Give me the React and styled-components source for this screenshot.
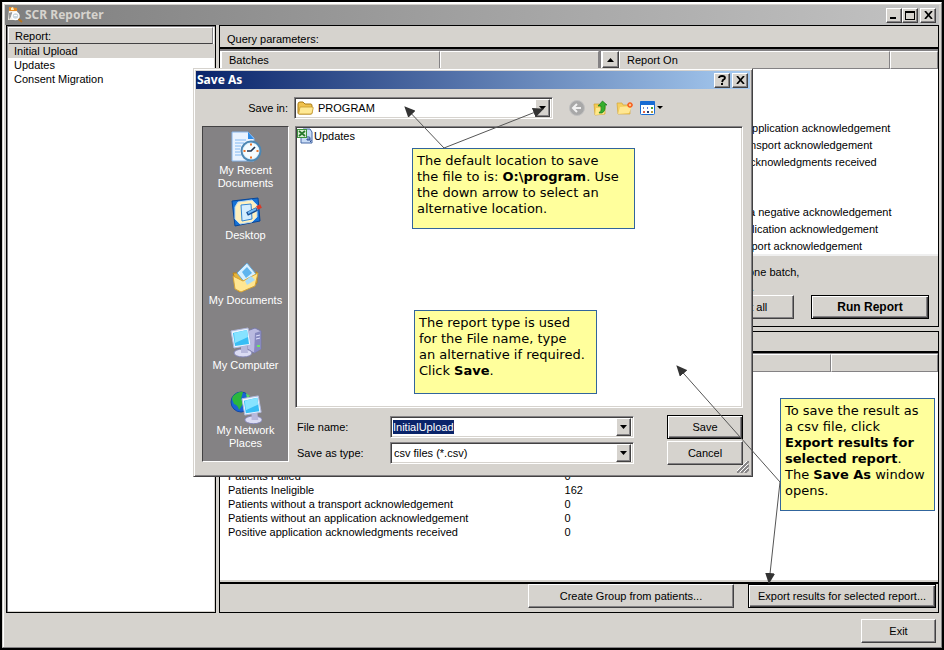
import React, { useEffect, useRef } from "react";
import styled, { createGlobalStyle, css } from "styled-components";

const face = "#d6d3ce";
const shade = "#848284";
const dark = "#424142";

const GlobalStyle = createGlobalStyle`
  * { box-sizing: border-box; }
  body {
    margin: 0;
    background: #000;
    color: #000;
    font: 11px/14px "Liberation Sans", Arial, sans-serif;
  }
  button, input, select { font: inherit; color: inherit; margin: 0; border-radius: 0; }
  ul { list-style: none; margin: 0; padding: 0; }
  p { margin: 0; }
`;

const raised = css`
  border: 1px solid;
  border-color: #fff ${dark} ${dark} #fff;
  box-shadow: inset -1px -1px 0 ${shade};
`;

const sunken = css`
  border: 1px solid;
  border-color: ${shade} #fff #fff ${shade};
  box-shadow: inset 1px 1px 0 ${dark}, inset -1px -1px 0 ${face};
`;

/* ---------- main window ---------- */

const Screen = styled.div`
  position: relative;
  display: flex;
  min-height: 100vh;
  padding: 2px;
  background: #000;
  overflow: hidden;
`;

const AppWindow = styled.main`
  flex: 1;
  display: flex;
  flex-direction: column;
  min-width: 0;
  padding: 2px;
  background: ${face};
  border: 1px solid;
  border-color: #fff ${shade} ${shade} ${face};
  box-shadow: inset 1px 1px 0 #fff;
`;

const TitleBar = styled.header`
  display: flex;
  align-items: center;
  gap: 2px;
  height: 20px;
  padding: 0 3px 0 2px;
  color: #d6d3ce;
  background: linear-gradient(90deg, #7f7f7f, #c3c3c3);
`;

const TitleText = styled.h1`
  flex: 1;
  margin: 0;
  font: bold 12px/16px "Noto Sans", sans-serif;
`;

const CaptionButtons = styled.div`
  display: flex;
`;

const CaptionButton = styled.button`
  ${raised}
  display: grid;
  place-items: center;
  width: 16px;
  height: 15px;
  padding: 0;
  margin-left: ${(p) => (p.$apart ? "2px" : "0")};
  color: #000;
  background: ${face};
`;

const Workspace = styled.div`
  flex: 1;
  display: grid;
  grid-template-columns: 210px minmax(0, 1fr);
  gap: 3px;
  padding: 0 0 0 1px;
`;

const ReportPanel = styled.nav`
  padding: 1px;
  background: #fff;
  border: 1px solid #000;
  box-shadow: inset 1px 1px 0 ${shade}, inset -1px -1px 0 ${face};
`;

const ReportHeading = styled.h2`
  height: 17px;
  margin: 0 1px 0 0;
  padding: 1px 6px 0;
  font: inherit;
  background: ${face};
  border: 1px solid;
  border-color: #fff ${shade} ${dark} #fff;
`;

const ReportItem = styled.button`
  display: block;
  width: 100%;
  height: 14px;
  padding: 0 6px;
  text-align: left;
  border: 0;
  background: ${(p) => (p.$selected ? face : "transparent")};
`;

const Content = styled.div`
  display: flex;
  flex-direction: column;
  gap: 4px;
  min-width: 0;
`;

const Group = styled.section`
  display: flex;
  flex-direction: column;
  flex: ${(p) => (p.$grow ? "1" : "none")};
  border: 1px solid #000;
`;

const GroupHeading = styled.h2`
  height: ${(p) => (p.$short ? "21px" : "23px")};
  margin: 0;
  padding: 6px 7px 0;
  font: inherit;
  border-bottom: 2px solid #000;
`;

const Lists = styled.div`
  display: grid;
  grid-template-columns: 380px 18px minmax(0, 1fr);
  height: 205px;
  padding-left: 1px;
  background: #fff;
  border-top: 2px solid ${shade};
`;

const ListPane = styled.div`
  border-right: ${(p) => (p.$split ? `2px solid ${shade}` : "0")};
`;

const ListHeader = styled.div`
  display: flex;
  height: 18px;
`;

const cell = css`
  padding: 1px 7px;
  text-align: left;
  font-weight: normal;
  background: ${face};
  border: 1px solid;
  border-color: #fff ${shade} ${shade} #fff;
`;

const HeaderCell = styled.div`
  ${cell}
  flex: ${(p) => (p.$width ? `0 0 ${p.$width}` : "1")};
`;

const ScrollTrack = styled.div`
  background: ${face};
  border-left: 1px solid #fff;
`;

const ScrollButton = styled.button`
  ${raised}
  display: grid;
  place-items: center;
  width: 17px;
  height: 17px;
  padding: 0;
  background: ${face};
`;

const Criteria = styled.ul`
  padding: 51px 0 0 125px;
`;

const Criterion = styled.li`
  height: 17px;
  padding-left: ${(p) => p.$indent};
  line-height: 17px;
  white-space: nowrap;
  margin-top: ${(p) => (p.$section ? "33px" : "0")};
`;

const RunBar = styled.div`
  display: grid;
  gap: 1px;
  padding: 9px 9px 7px;
  border-top: 2px solid #efefef;
`;

const Hint = styled.p`
  padding-left: calc(74% + 1px);
`;

const ButtonRow = styled.div`
  display: flex;
  justify-content: flex-end;
  gap: ${(p) => p.$gap};
`;

const Button = styled.button`
  ${raised}
  min-width: ${(p) => p.$width};
  height: 24px;
  padding: 0 4px;
  text-align: center;
  background: ${face};
  ${(p) =>
    p.$primary &&
    css`
      border-color: #000;
      box-shadow: inset 1px 1px 0 #fff, inset -1px -1px 0 ${dark}, inset -2px -2px 0 ${shade};
    `}
  ${(p) => p.$bold && "font: bold 12px/14px 'Liberation Sans', Arial, sans-serif;"}
`;

const ResultsArea = styled.div`
  flex: 1;
  padding: 0 0 0 2px;
  background: #fff;
  border-top: 1px solid ${shade};
  border-bottom: 2px solid ${face};
`;

const Results = styled.table`
  width: 100%;
  table-layout: fixed;
  border-collapse: separate;
  border-spacing: 0;
  th { ${cell} height: 18px; }
  td { height: 14px; padding: 0 6px; }
  tbody::before { content: ""; display: block; height: 97px; }
`;

const ResultsFooter = styled.div`
  padding: 0 2px 4px;
  border-top: 2px solid #000;
`;

const ExitBar = styled.footer`
  display: flex;
  justify-content: flex-end;
  padding: 6px 3px 2px;
`;

/* ---------- dialog ---------- */

const Dialog = styled.section`
  position: absolute;
  left: 193px;
  top: 68px;
  width: 560px;
  padding: 2px;
  background: ${face};
  border: 1px solid;
  border-color: ${face} ${dark} ${dark} ${face};
  box-shadow: inset 1px 1px 0 #fff, inset -1px -1px 0 ${shade};
`;

const DialogTitle = styled(TitleBar)`
  height: 18px;
  padding: 0 2px 0 1px;
  color: #fff;
  background: linear-gradient(90deg, #0a246a, #a6caf0);
`;

const LookIn = styled.div`
  display: flex;
  align-items: center;
  padding: 8px 0 7px;
`;

const LookLabel = styled.label`
  width: 98px;
  padding-right: 6px;
  text-align: right;
`;

const Tools = styled.div`
  display: flex;
  gap: 6px;
  margin-left: 15px;
`;

const Tool = styled.button`
  display: flex;
  align-items: center;
  padding: 0;
  border: 0;
  background: none;
`;

const Browser = styled.div`
  display: grid;
  grid-template-columns: 87px minmax(0, 1fr);
  gap: 6px;
  padding: 0 6px 12px;
`;

const Places = styled.ul`
  height: 336px;
  padding-top: 3px;
  background: ${shade};
  border: 1px solid;
  border-color: ${dark} #fff #fff ${dark};
`;

const Place = styled.li`
  height: 65px;
`;

const PlaceButton = styled.button`
  display: flex;
  flex-direction: column;
  align-items: center;
  width: 100%;
  padding: 0;
  line-height: 13px;
  color: #fff;
  border: 0;
  background: none;
  white-space: nowrap;
`;

const FileColumn = styled.div`
  display: flex;
  flex-direction: column;
  height: 336px;
`;

const FileList = styled.div`
  ${sunken}
  flex: none;
  height: 282px;
  margin-right: 1px;
  padding: 1px;
  background: #fff;
`;

const FileButton = styled.button`
  display: flex;
  align-items: center;
  gap: 1px;
  padding: 0;
  border: 0;
  background: none;
`;

const SaveForm = styled.form`
  display: grid;
  grid-template-columns: 95px 245px 1fr;
  row-gap: 2px;
  align-items: center;
  padding: 7px 1px 0 0;
`;

const FormLabel = styled.label`
  padding-left: 2px;
`;

const Combo = styled.div`
  ${sunken}
  display: flex;
  position: relative;
  align-items: center;
  width: ${(p) => p.$width};
  height: 22px;
  padding: 2px;
  background: #fff;
`;

const ComboSelect = styled.select`
  appearance: none;
  flex: 1;
  height: 18px;
  min-width: 0;
  padding: 0 ${(p) => (p.$roomy ? "4px" : "1px")};
  border: 0;
  outline: 0;
  background: transparent;
`;

const ComboInput = styled.input`
  flex: 1;
  min-width: 0;
  height: 14px;
  padding: 0;
  border: 0;
  outline: 0;
  background: transparent;
  &::selection { color: #fff; background: #0a246a; }
`;

const ComboArrow = styled.span`
  ${raised}
  display: grid;
  place-items: center;
  width: 15px;
  height: 18px;
  background: ${face};
  pointer-events: none;
`;

const Grip = styled.svg`
  position: absolute;
  right: 3px;
  bottom: 3px;
`;

/* ---------- notes ---------- */

const Note = styled.aside`
  position: absolute;
  left: ${(p) => p.$left};
  top: ${(p) => p.$top};
  width: ${(p) => p.$width};
  height: ${(p) => p.$height};
  padding: 4px 4px;
  font: 13px/16px "DejaVu Sans", Verdana, sans-serif;
  white-space: nowrap;
  background: #ffff9c;
  border: 1px solid #31659c;
`;

const Pointers = styled.svg`
  position: absolute;
  left: 0;
  top: 0;
  pointer-events: none;
`;

/* ---------- icons ---------- */

const Triangle = ({ up }) => (
  <svg width="7" height="4" aria-hidden="true">
    <path d={up ? "M0 4 3.500 0 7 4z" : "M0 0h7L3.500 4z"} fill="#000" />
  </svg>
);

const AppIcon = () => (
  <svg width="16" height="16" viewBox="0 0 16 16" aria-hidden="true">
    <path d="M2 3h8l1 10H1z" fill="#f4f1e8" />
    <path d="m2 0 8 1v3H2z" fill="#e78b24" />
    <path d="M4 1 6 0l1 3H4z" fill="#fff1c0" />
    <path d="m2 6 3-1v3l-3 5z" fill="#9b9b9b" />
    <circle cx="8.500" cy="9" r="3.500" fill="#c9d6de" stroke="#fff" strokeWidth="1.500" />
    <path d="m11.500 12 3.500 3" stroke="#b8741c" strokeWidth="2" />
    <path d="M7 8.500h3" stroke="#fff" />
  </svg>
);

const Folder = () => (
  <svg width="17" height="16" viewBox="0 0 17 16" aria-hidden="true">
    <path d="M1 4q0-2 2-2h3l2 2h6q1 0 1 2v7q0 1-1 1H2q-1 0-1-1z" fill="#f0c24d" stroke="#a97b16" />
    <path d="M3 7h12q2 0 1 2l-1 4q0 1-2 1H2q-1 0 0-2z" fill="#ffe994" stroke="#c79a2c" strokeWidth=".8" />
  </svg>
);

const BackIcon = () => (
  <svg width="18" height="18" viewBox="0 0 18 18" aria-hidden="true">
    <circle cx="9" cy="9" r="7.500" fill="#a8a8a8" stroke="#c0c0c0" />
    <path d="M13 9H5m4-4L5 9l4 4" fill="none" stroke="#f1f1f1" strokeWidth="2" />
  </svg>
);

const UpIcon = () => (
  <svg width="18" height="18" viewBox="0 0 18 18" aria-hidden="true">
    <path d="M2 5h5l1 2h5v8l-10 1z" fill="#f3cb55" stroke="#d3a12b" strokeWidth=".7" />
    <path d="m4 9 10-1-2 7-9 1z" fill="#ffe98a" />
    <path d="M7 14q3-2 2-7H6l4.500-5L15 6h-2q1 6-3 8z" fill="#35ae2c" stroke="#16791a" strokeWidth=".7" />
  </svg>
);

const NewFolderIcon = () => (
  <svg width="18" height="18" viewBox="0 0 18 18" aria-hidden="true">
    <path d="M1 4h5l1 2h7v9H2z" fill="#f5cf62" stroke="#d5a637" strokeWidth=".7" />
    <path d="m4 8 12-1-3 7-11 1z" fill="#ffe792" />
    <path d="M14 3v6m-3-3h6m-5-2 4 4m0-4-4 4" stroke="#f6601f" strokeWidth="1.400" />
    <circle cx="14" cy="6" r="1.200" fill="#ffc48c" />
  </svg>
);

const ViewIcon = () => (
  <svg width="24" height="18" viewBox="0 0 24 18" aria-hidden="true">
    <rect x="0.500" y="2.500" width="14" height="13" rx="1" fill="#fff" stroke="#176bd3" />
    <path d="M0 3q0-1 1-1h13q1 0 1 1v3H0z" fill="#176bd3" />
    <path d="M3 8h1v2H3z" fill="#7b8db8" />
    <path d="M7 8h1v2H7z" fill="#5b79e0" />
    <path d="M11 8h2v2h-2z" fill="#48a23c" />
    <path d="M3 12h2v2H3z" fill="#e06242" />
    <path d="M7 12h2v2H7z" fill="#25386a" />
    <path d="M11 12h2v2h-2z" fill="#b89a3c" />
    <path d="M17 7h6l-3 3z" fill="#000" />
  </svg>
);

const CsvIcon = () => (
  <svg width="16" height="16" viewBox="0 0 16 16" aria-hidden="true">
    <path d="M6 1h7l2 3v11H4V9z" fill="#c9dcf6" stroke="#4468a6" />
    <path d="M0 1h10v9H0z" fill="#3c923d" />
    <path d="M1 2h8v7H1z" fill="#dceed6" />
    <path d="m2 3 6 5M8 3 2 8" stroke="#27782b" strokeWidth="1.700" />
    <path d="M10 9h2q1 0 1 1v2h-3v-1h3m1 1v1l-1 1" fill="none" stroke="#2c4c91" />
  </svg>
);

const RecentIcon = () => (
  <svg width="32" height="34" viewBox="0 0 32 34" aria-hidden="true">
    <path d="M2 2h16l6 6v23H2z" fill="#e9f3ff" stroke="#86b4e9" />
    <path d="M18 2v7h6z" fill="#2f8be6" />
    <path d="M5 10h11M5 13h9M5 16h6M5 19h5M5 22h5M5 25h6" stroke="#81b8f2" />
    <circle cx="21" cy="21" r="9.500" fill="#dff1fb" stroke="#4c87b4" strokeWidth="2" />
    <circle cx="21" cy="21" r="7.500" fill="#f5fcff" />
    <path d="M21 13.500v2m0 11v2M13.500 21h2m11 0h2" stroke="#ed7328" strokeWidth="2" />
    <path d="m25 17-4 4h-4" fill="none" stroke="#1d3352" strokeWidth="1.700" />
  </svg>
);

const DesktopIcon = () => (
  <svg width="32" height="34" viewBox="0 0 32 34" aria-hidden="true">
    <path d="m2 6 26-3 2 23-25 5z" fill="#1672d6" stroke="#084699" />
    <path d="m8 7 14-2 5 5v12l-5 5-12 2-5-5V12z" fill="#fff0bd" stroke="#b9d8ef" />
    <path d="m11 10 10-1 1 15-10 2z" fill="#d3edff" stroke="#3185d4" />
    <path d="m17 19 10-5" stroke="#164c91" strokeWidth="4" />
    <path d="m18 18 8-4" stroke="#70b9f5" strokeWidth="2" />
    <path d="m27 13 4-2" stroke="#d83828" strokeWidth="4" />
  </svg>
);

const DocumentsIcon = () => (
  <svg width="32" height="34" viewBox="0 0 32 34" aria-hidden="true">
    <path d="M3 13h9l3 3 12-4v11L9 32z" fill="#e5b43c" stroke="#b78219" />
    <path d="m7 13 10-10 9 11-10 10z" fill="#d6efff" stroke="#65a8d7" />
    <path d="m12 12 5-5 5 6-6 5z" fill="#5fb4ee" />
    <path d="m3 16 10 5 15-8-3 13-14 6-6-3z" fill="#ffe692" stroke="#d6a333" />
    <path d="m15 21 6-5 4 4-8 5z" fill="#a9dcf8" />
  </svg>
);

const Monitor = () => (
  <>
    <ellipse cx="13" cy="28" rx="9" ry="4" fill="#dbdcf3" stroke="#8385b5" />
    <path d="M11 20h6l1 8h-7z" fill="#b8b9dc" />
    <path d="m1 6 17-3 3 17-17 3z" fill="#eaf5ff" stroke="#b0b7db" />
    <path d="m3 8 14-3 2 14-14 2z" fill="#38bef5" />
    <path d="m4 8 13-3 1 7-13 6z" fill="#87e3ff" />
  </>
);

const ComputerIcon = () => (
  <svg width="32" height="34" viewBox="0 0 32 34" aria-hidden="true">
    <path d="m17 6 8-3 6 3v18l-7 4-7-4z" fill="#babae0" stroke="#7779a8" />
    <path d="m25 8 6-2v18l-7 4z" fill="#8789bf" />
    <path d="m26 11 4-1m-4 4 4-1" stroke="#e3e3ff" />
    <path d="M27 21h3" stroke="#6bea61" strokeWidth="2" />
    <Monitor />
  </svg>
);

const NetworkIcon = () => (
  <svg width="32" height="34" viewBox="0 0 32 34" aria-hidden="true">
    <circle cx="11" cy="12" r="10" fill="#1864d4" stroke="#1047a8" />
    <path d="M3 6q6-5 10-4l-2 7 3 3-5 8q-1-5-5-6l-2-5z" fill="#2bb73c" />
    <path d="m16 3 4 3-3 3z" fill="#65dd5d" />
    <g transform="translate(11 3) scale(.96)"><Monitor /></g>
  </svg>
);

const places = [
  { icon: <RecentIcon />, lines: ["My Recent", "Documents"] },
  { icon: <DesktopIcon />, lines: ["Desktop"] },
  { icon: <DocumentsIcon />, lines: ["My Documents"] },
  { icon: <ComputerIcon />, lines: ["My Computer"] },
  { icon: <NetworkIcon />, lines: ["My Network", "Places"] },
];

const results = [
  ["Patients Failed", "0"],
  ["Patients Ineligible", "162"],
  ["Patients without a transport acknowledgement", "0"],
  ["Patients without an application acknowledgement", "0"],
  ["Positive application acknowledgments received", "0"],
];

function CloseGlyph() {
  return (
    <svg width="9" height="8" aria-hidden="true">
      <path d="m1 0 7 8M8 0 1 8" stroke="#000" strokeWidth="1.700" />
    </svg>
  );
}

function SaveDialog() {
  const nameRef = useRef(null);
  useEffect(() => {
    nameRef.current.focus();
    nameRef.current.select();
  }, []);

  return (
    <Dialog role="dialog" aria-labelledby="save-title">
      <DialogTitle>
        <TitleText as="h2" id="save-title">Save As</TitleText>
        <CaptionButtons>
          <CaptionButton aria-label="Help">
            <svg width="8" height="10" aria-hidden="true">
              <path d="M1 3q0-2 3-2t3 2q0 1-2 2l-1 2" fill="none" stroke="#000" strokeWidth="1.800" />
              <path d="M3 8h2v2H3z" />
            </svg>
          </CaptionButton>
          <CaptionButton $apart aria-label="Close dialog"><CloseGlyph /></CaptionButton>
        </CaptionButtons>
      </DialogTitle>
      <LookIn>
        <LookLabel htmlFor="folder">Save in:</LookLabel>
        <Combo $width="259px">
          <Folder />
          <ComboSelect id="folder" $roomy defaultValue="PROGRAM">
            <option>PROGRAM</option>
          </ComboSelect>
          <ComboArrow><Triangle /></ComboArrow>
        </Combo>
        <Tools>
          <Tool aria-label="Back"><BackIcon /></Tool>
          <Tool aria-label="Up one level"><UpIcon /></Tool>
          <Tool aria-label="New folder"><NewFolderIcon /></Tool>
          <Tool aria-label="View"><ViewIcon /></Tool>
        </Tools>
      </LookIn>
      <Browser>
        <Places>
          {places.map(({ icon, lines }) => (
            <Place key={lines[0]}>
              <PlaceButton>
                {icon}
                {lines.map((line) => <span key={line}>{line}</span>)}
              </PlaceButton>
            </Place>
          ))}
        </Places>
        <FileColumn>
          <FileList>
            <FileButton><CsvIcon />Updates</FileButton>
          </FileList>
          <SaveForm onSubmit={(e) => e.preventDefault()}>
            <FormLabel htmlFor="file-name">File name:</FormLabel>
            <Combo $width="244px">
              <ComboInput id="file-name" ref={nameRef} defaultValue="InitialUpload" />
              <ComboArrow><Triangle /></ComboArrow>
            </Combo>
            <ButtonRow><Button $primary $width="76px">Save</Button></ButtonRow>
            <FormLabel htmlFor="file-type">Save as type:</FormLabel>
            <Combo $width="244px">
              <ComboSelect id="file-type" defaultValue="csv files (*.csv)">
                <option>csv files (*.csv)</option>
              </ComboSelect>
              <ComboArrow><Triangle /></ComboArrow>
            </Combo>
            <ButtonRow><Button type="button" $width="76px">Cancel</Button></ButtonRow>
          </SaveForm>
        </FileColumn>
      </Browser>
      <Grip width="12" height="12" aria-hidden="true">
        <path d="M0 12 12 0M4 12l8-8M8 12l4-4" stroke="#848284" strokeWidth="2" />
        <path d="M-1 11 11-1M3 11l8-8M7 11l4-4" stroke="#fff" />
      </Grip>
    </Dialog>
  );
}

export default function App() {
  return (
    <>
      <GlobalStyle />
      <Screen>
        <AppWindow>
          <TitleBar>
            <AppIcon />
            <TitleText>SCR Reporter</TitleText>
            <CaptionButtons>
              <CaptionButton aria-label="Minimize">
                <svg width="8" height="8" aria-hidden="true"><path d="M0 6h6v2H0z" /></svg>
              </CaptionButton>
              <CaptionButton aria-label="Maximize">
                <svg width="10" height="9" aria-hidden="true">
                  <path d="M0 0h10v9H0zM1 2v6h8V2z" fillRule="evenodd" />
                </svg>
              </CaptionButton>
              <CaptionButton $apart aria-label="Close"><CloseGlyph /></CaptionButton>
            </CaptionButtons>
          </TitleBar>
          <Workspace>
            <ReportPanel aria-label="Reports">
              <ReportHeading>Report:</ReportHeading>
              <ul>
                <li><ReportItem $selected>Initial Upload</ReportItem></li>
                <li><ReportItem>Updates</ReportItem></li>
                <li><ReportItem>Consent Migration</ReportItem></li>
              </ul>
            </ReportPanel>
            <Content>
              <Group>
                <GroupHeading>Query parameters:</GroupHeading>
                <Lists>
                  <ListPane $split>
                    <ListHeader>
                      <HeaderCell $width="219px">Batches</HeaderCell>
                      <HeaderCell />
                    </ListHeader>
                  </ListPane>
                  <ScrollTrack>
                    <ScrollButton aria-label="Scroll up"><Triangle up /></ScrollButton>
                  </ScrollTrack>
                  <ListPane>
                    <ListHeader>
                      <HeaderCell $width="271px">Report On</HeaderCell>
                      <HeaderCell />
                    </ListHeader>
                    <Criteria>
                      <Criterion $indent="2px">application acknowledgement</Criterion>
                      <Criterion $indent="0">ansport acknowledgement</Criterion>
                      <Criterion $indent="0">acknowledgments received</Criterion>
                      <Criterion $indent="5px" $section>a negative acknowledgement</Criterion>
                      <Criterion $indent="2px">plication acknowledgement</Criterion>
                      <Criterion $indent="2px">sport acknowledgement</Criterion>
                    </Criteria>
                  </ListPane>
                </Lists>
                <RunBar>
                  <Hint>one batch,</Hint>
                  <Hint>&nbsp;.</Hint>
                  <ButtonRow $gap="17px">
                    <Button $width="98px">Select all</Button>
                    <Button $primary $bold $width="118px">Run Report</Button>
                  </ButtonRow>
                </RunBar>
              </Group>
              <Group $grow>
                <GroupHeading $short />
                <ResultsArea>
                  <Results>
                    <colgroup>
                      <col style={{ width: "47%" }} />
                      <col />
                      <col style={{ width: "15%" }} />
                    </colgroup>
                    <thead>
                      <tr><th /><th /><th /></tr>
                    </thead>
                    <tbody>
                      {results.map(([name, count]) => (
                        <tr key={name}><td>{name}</td><td>{count}</td><td /></tr>
                      ))}
                    </tbody>
                  </Results>
                </ResultsArea>
                <ResultsFooter>
                  <ButtonRow $gap="14px">
                    <Button $width="206px">Create Group from patients...</Button>
                    <Button $primary $width="188px">Export results for selected report...</Button>
                  </ButtonRow>
                </ResultsFooter>
              </Group>
            </Content>
          </Workspace>
          <ExitBar>
            <Button $width="75px">Exit</Button>
          </ExitBar>
        </AppWindow>

        <SaveDialog />

        <Note $left="412px" $top="148px" $width="223px" $height="81px">
          The default location to save<br />
          the file to is: <b>O:\program</b>. Use<br />
          the down arrow to select an<br />
          alternative location.
        </Note>
        <Note $left="414px" $top="310px" $width="183px" $height="84px">
          The report type is used<br />
          for the File name, type<br />
          an alternative if required.<br />
          Click <b>Save</b>.
        </Note>
        <Note $left="780px" $top="398px" $width="155px" $height="113px">
          To save the result as<br />
          a csv file, click<br />
          <b>Export results for<br />
          selected report</b>.<br />
          The <b>Save As</b> window<br />
          opens.
        </Note>
        <Pointers width="944" height="650" aria-hidden="true">
          <defs>
            <marker id="tip" markerUnits="userSpaceOnUse" markerWidth="11" markerHeight="10" refX="10" refY="5" orient="auto">
              <path d="M0 0 11 5 0 10z" fill="#333" />
            </marker>
          </defs>
          <g stroke="#555" fill="none">
            <path d="M444 148 405 107" markerEnd="url(#tip)" />
            <path d="M444 148 543 109" markerEnd="url(#tip)" />
            <path d="M780 482 677 366" markerEnd="url(#tip)" />
            <path d="M780 482 769 583" markerEnd="url(#tip)" />
          </g>
        </Pointers>
      </Screen>
    </>
  );
}
